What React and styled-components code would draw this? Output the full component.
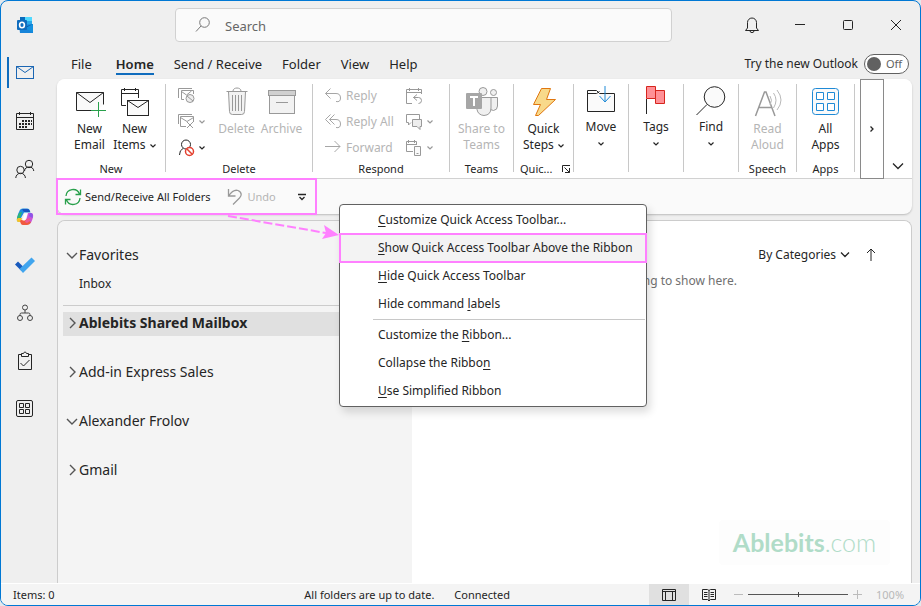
import React, { useState } from "react";
//Style
import styled, { createGlobalStyle, css } from "styled-components";

const App = () => {
	return (
		<>
			<GlobalStyle />
			<Window>
				<TitleBar />
				<Main>
					<Rail />
					<Content>
						<TabBar />
						<RibbonCard>
							<Ribbon />
							<QuickAccess />
						</RibbonCard>
						<Panes>
							<FolderPane />
							<MessageList />
						</Panes>
					</Content>
				</Main>
				<StatusBar />
			</Window>
		</>
	);
};

//Title bar
const TitleBar = () => (
	<StyledTitleBar>
		<OutlookLogo />
		<SearchBox>
			<Svg w={16} h={16} stroke="#777">
				<circle cx="9.5" cy="5.5" r="4.8" />
				<path d="M6 9L1 14.5" />
			</Svg>
			<input type="text" aria-label="Search" placeholder="Search" />
		</SearchBox>
		<WindowButton aria-label="Notifications">
			<Svg w={16} h={18}>
				<path d="M3.5 12V6.5a4.5 4.5 0 0 1 9 0V12l2 2.5h-13zM6 14.8a2 1.8 0 0 0 4 0" />
			</Svg>
		</WindowButton>
		<WindowButton aria-label="Minimize">
			<Svg w={12} h={12}>
				<path d="M1 5.5h10" />
			</Svg>
		</WindowButton>
		<WindowButton aria-label="Maximize">
			<Svg w={12} h={12}>
				<rect x="1.5" y="1.5" width="9" height="9" rx="1" />
			</Svg>
		</WindowButton>
		<WindowButton aria-label="Close">
			<Svg w={12} h={12}>
				<path d="M1 1l10 10M11 1L1 11" />
			</Svg>
		</WindowButton>
	</StyledTitleBar>
);

const OutlookLogo = () => (
	<svg width="18" height="18" viewBox="0 0 18 18" role="img" aria-label="Outlook">
		<rect x="4" y="1" width="12" height="9" fill="#28a8ea" />
		<rect x="8" y="1" width="8" height="4" fill="#50d9ff" />
		<rect x="4" y="1" width="5" height="4" fill="#0a6cbd" />
		<path d="M3 9l14-1v9H4z" fill="#1784d9" />
		<path d="M17 8v8.5L9 12z" fill="#1490df" />
		<path d="M9 12l8-4-8 3z" fill="#0a4f94" />
		<rect x="1" y="4" width="10" height="10" rx="1" fill="#0f6cbd" />
		<ellipse cx="6" cy="9" rx="2.4" ry="2.7" fill="none" stroke="#fff" strokeWidth="1.6" />
	</svg>
);

//Left rail
const railItems = [
	{
		name: "Mail",
		icon: (
			<g stroke="#1b66b3">
				<rect x="1.5" y="3.5" width="17" height="12" />
				<path d="M1.5 3.5l8.5 6 8.5-6" />
			</g>
		),
	},
	{
		name: "Calendar",
		icon: (
			<g>
				<path d="M1.5 2.5h17v16h-17zM1.5 6.5h17M4.5 1v3M15.5 1v3" />
				<path d="M7 10h10M4 13h13M4 16h8" strokeWidth="2" strokeDasharray="2 1" />
			</g>
		),
	},
	{
		name: "People",
		icon: (
			<g>
				<circle cx="14" cy="5" r="3.7" />
				<path d="M9.5 12a4.7 4.7 0 0 1 9.3 0" />
				<circle cx="5.5" cy="11" r="3.7" />
				<path d="M.8 19a4.8 4.8 0 0 1 9.6 0" />
			</g>
		),
	},
	{
		name: "Copilot",
		icon: (
			<g stroke="none">
				<path d="M4 5c1-3 2-3.500 4-3.500h4c2 0 2.500 1 3 2.500l.5 1.500H9L6 11 3 14C1.500 13 2 9 4 5z" fill="#1c8fe0" />
				<path d="M7 2h5c2 0 2.500 1 3 3h-5C8 5 8 3 7 2z" fill="#1a55c0" />
				<path d="M4 6l3-1-3 10c-2 0-2.500-2-2-4z" fill="#2fb673" />
				<path d="M3 11h4l-1 4H3c-2-1-1.500-3 0-4z" fill="#f4c22c" />
				<path d="M13 6h3c2.500 0 2.500 3 1.500 6s-2 5-4 5l-3-1z" fill="#c957d8" />
				<path d="M15 6c3 0 3 2 2.500 5L14 9z" fill="#8b56e8" />
				<path d="M6 13h6l4 2c-1 2-2 3-4 3H8c-2 0-2.500-2-3-4z" fill="#f0593e" />
				<path d="M11 12l4-1c0 3-1 4-3 5l-2-1z" fill="#ef5b94" />
				<path d="M9.500 6.500h3L10 13.500H7.500z" fill="#fff" />
			</g>
		),
	},
	{
		name: "To Do",
		icon: (
			<g stroke="none">
				<path d="M0 9.500L3 6.500 9.500 13 6.500 16z" fill="#185abd" />
				<path d="M4.500 14L16.500 2.500 20 6 8 18z" fill="#41a5ee" />
			</g>
		),
	},
	{
		name: "Org chart",
		icon: (
			<g stroke="#444">
				<circle cx="10" cy="4.500" r="2.5" />
				<path d="M10 7v3M5 13v-1.500q0-1.500 1.500-1.500h7q1.500 0 1.500 1.500V13" />
				<circle cx="5" cy="15" r="2.5" />
				<circle cx="15" cy="15" r="2.5" />
			</g>
		),
	},
	{
		name: "Tasks",
		icon: (
			<g>
				<path d="M6.500 3.500h-3v15h13v-15h-3M6.500 2.500h2l1-1.500h1l1 1.500h2v3h-7z" />
				<path d="M5.500 12l3 3 6-6" />
			</g>
		),
	},
	{
		name: "More apps",
		icon: (
			<g>
				<rect x="1.500" y="1.500" width="16" height="16" rx="1.500" />
				<path d="M4.500 4.500h4v4h-4zM10.500 4.500h4v4h-4zM4.500 10.500h4v4h-4zM10.500 10.500h4v4h-4z" />
			</g>
		),
	},
];

const Rail = () => (
	<StyledRail>
		{railItems.map((item, i) => (
			<RailButton key={item.name} aria-label={item.name} $active={i === 0}>
				<Svg w={20} h={20}>{item.icon}</Svg>
			</RailButton>
		))}
	</StyledRail>
);

//Ribbon tabs
const tabs = ["File", "Home", "Send / Receive", "Folder", "View", "Help"];

const TabBar = () => {
	const [tab, setTab] = useState("Home");
	return (
		<StyledTabBar>
			{tabs.map((name) => (
				<Tab key={name} $active={name === tab} onClick={() => setTab(name)}>
					{name}
				</Tab>
			))}
			<TryNew>
				Try the new Outlook
				<Toggle>
					<input type="checkbox" />
					Off
				</Toggle>
			</TryNew>
		</StyledTabBar>
	);
};

//Ribbon
const Ribbon = () => (
	<StyledRibbon>
		<Group w={108} label="New">
			<Buttons $start={10}>
				<BigButton>
					<Svg w={32} h={32}>
						<path d="M23 24.500H2.500v-18h27v12" fill="#fafafa" />
						<path d="M2.500 6.500L16 16.500l13.500-10" />
						<path d="M24.500 16v15M17 24.500h15" stroke="#29a04c" />
					</Svg>
					<span>New<br />Email</span>
				</BigButton>
				<BigButton>
					<Svg w={32} h={32}>
						<path d="M7 19.500H2.500v-16h17V12M2.500 7.500h17M5.500 2v3M16.500 2v3" />
						<rect x="8.500" y="14.500" width="21" height="15" fill="#fafafa" />
						<path d="M8.500 14.500L19 21.500l10.500-7" />
					</Svg>
					<span>New<br />Items <Chevron /></span>
				</BigButton>
			</Buttons>
		</Group>
		<Group w={146} label="Delete">
			<Buttons $start={12}>
				<SmallColumn $w={36}>
					<SmallButton aria-label="Ignore" disabled>
						<Svg w={18} h={18}>
							<path d="M.5 11V1.500H14M6 12.500H3.500v-9h12V7M3.500 4.500l5 3.500 5-4" />
							<circle cx="12" cy="11.500" r="4" fill="#eee" />
							<path d="M9 9l6 5" />
						</Svg>
					</SmallButton>
					<SmallButton aria-label="Clean Up" disabled>
						<Svg w={18} h={18}>
							<path d="M.5 11V1.500H14M8 13.500H2.500v-10h13V9M2.500 4.500l6.500 4 6.500-4M9 9l6 6M15 9l-6 6" />
						</Svg>
						<Chevron />
					</SmallButton>
					<SmallButton aria-label="Junk">
						<Svg w={18} h={18}>
							<circle cx="8" cy="5.500" r="4.500" />
							<path d="M5 9.500Q1.500 11 1.500 16" />
							<circle cx="11.500" cy="12.500" r="4" stroke="#e3402f" fill="#fff" strokeWidth="1.500" />
							<path d="M9 10l5.500 5.500" stroke="#e3402f" strokeWidth="1.500" />
						</Svg>
						<Chevron />
					</SmallButton>
				</SmallColumn>
				<BigButton disabled>
					<Svg w={32} h={32}>
						<path d="M7.500 5.500h17l-1 20q0 3-3 3h-9q-3 0-3-3z" fill="#f2f2f2" />
						<path d="M5.500 5.500h21M12 5c0-4 8-4 8 0M11.500 9v16M14.500 9v16M17.500 9v16M20.500 9v16" />
					</Svg>
					<span>Delete</span>
				</BigButton>
				<BigButton disabled>
					<Svg w={32} h={32}>
						<rect x="3.500" y="8.500" width="25" height="19" fill="#f2f2f2" />
						<rect x="2.500" y="4.500" width="27" height="5" fill="#d0d0d0" />
						<path d="M10 16.500h12" />
					</Svg>
					<span>Archive</span>
				</BigButton>
			</Buttons>
		</Group>
		<Group w={136} label="Respond">
			<Buttons $start={12}>
				<SmallColumn $w={81}>
					<SmallButton disabled>
						<Svg w={18} h={18} stroke="#a6a6a6">
							<path d="M5.500 1.500l-5 5 5 5M.5 6.500H11q4.500 0 4.500 4.500T11 14.500" />
						</Svg>
						Reply
					</SmallButton>
					<SmallButton disabled>
						<Svg w={18} h={18} stroke="#a6a6a6">
							<path d="M5.500 1.500l-5 5 5 5M9.500 1.500l-5 5 5 5M4.500 6.500H11q4.500 0 4.500 4.500T11 14.500" />
						</Svg>
						Reply All
					</SmallButton>
					<SmallButton disabled>
						<Svg w={18} h={18} stroke="#a6a6a6">
							<path d="M0 7.500h15M9.500 2l5.500 5.500L9.500 13" />
						</Svg>
						Forward
					</SmallButton>
				</SmallColumn>
				<SmallColumn>
					<SmallButton aria-label="Meeting" disabled>
						<Svg w={18} h={18}>
							<path d="M6 16.500H.5v-14h15V7M.5 5.500h15M3.500 1v3M12.500 1v3M11 7.500L7.500 10.500l3.500 3M7.500 10.500h5q3 0 3 3t-3 3" />
						</Svg>
					</SmallButton>
					<SmallButton aria-label="Reply with IM" disabled>
						<Svg w={18} h={18}>
							<path d="M5 9.500L2.500 12V9.500h-2v-8h13V6" />
							<path d="M6.500 6.500h9v7H14v3l-3-3H6.500z" fill="#eee" />
						</Svg>
						<Chevron />
					</SmallButton>
					<SmallButton aria-label="More" disabled>
						<Svg w={18} h={18}>
							<path d="M7 12.500H.5v-10h10V6M.5 5.500h10M2.500 1v3M8.500 1v3" />
							<path d="M8.500 7.500h6v9h-6zM10.500 14.500h2" fill="#fafafa" />
						</Svg>
						<Chevron />
					</SmallButton>
				</SmallColumn>
			</Buttons>
		</Group>
		<Group w={63} label="Teams">
			<Buttons $center>
				<BigButton disabled>
					<Svg w={32} h={32}>
						<circle cx="17" cy="5.500" r="4" fill="#f0f0f0" />
						<circle cx="27.500" cy="6.500" r="3" fill="#f0f0f0" />
						<path d="M24 11.500h7.500V20q0 4-4 4.500l-3-1z" fill="#f0f0f0" />
						<path d="M14 11.500h11V22q0 7-7 7.500-6-.5-7-6z" fill="#f0f0f0" />
						<rect x="0" y="7" width="16" height="16" rx="1" fill="#a6a6a6" stroke="none" />
						<path d="M4 11h8M8 11v9" stroke="#fff" strokeWidth="2" />
					</Svg>
					<span>Share to<br />Teams</span>
				</BigButton>
			</Buttons>
		</Group>
		<Group w={59} label="Quic..." launcher>
			<Buttons $center>
				<BigButton>
					<Svg w={32} h={32} stroke="#e0760f">
						<path d="M13.500 2.500h9l-4 11h9L10.500 29.500h-3l5-11h-7z" fill="#f8d98a" />
					</Svg>
					<span>Quick<br />Steps <Chevron /></span>
				</BigButton>
			</Buttons>
		</Group>
		<Group w={54}>
			<Buttons $center>
				<BigButton $solo>
					<Svg w={32} h={32}>
						<path d="M2.500 25.500v-21h9l3 3h15v18zM2.500 7.500h9l3-2" fill="#fafafa" />
						<path d="M20 0v16M14.500 10l5.500 6 5.500-6" stroke="#1f8ad6" />
					</Svg>
					<span>Move</span>
					<Chevron />
				</BigButton>
			</Buttons>
		</Group>
		<Group w={54}>
			<Buttons $center>
				<BigButton $solo>
					<Svg w={32} h={32}>
						<path d="M6.500 28V13" />
						<path d="M15.500 4.500h9v13h-9z" fill="#ff9096" stroke="#d6251d" />
						<path d="M6.500.5h9v12h-9z" fill="#ff9096" stroke="#d6251d" />
					</Svg>
					<span>Tags</span>
					<Chevron />
				</BigButton>
			</Buttons>
		</Group>
		<Group w={54}>
			<Buttons $center>
				<BigButton $solo>
					<Svg w={32} h={32}>
						<circle cx="19.500" cy="11" r="10.300" fill="#fafafa" />
						<path d="M12 18.500L1.500 29" />
					</Svg>
					<span>Find</span>
					<Chevron />
				</BigButton>
			</Buttons>
		</Group>
		<Group w={57} label="Speech">
			<Buttons $center>
				<BigButton disabled>
					<Svg w={32} h={32}>
						<path d="M3.500 30L12.500 6h1.500l9 24M7 21.500h12.500" strokeWidth="1.500" />
						<path d="M18 10q3 4 0 9M21.500 7q5 7 0 15M25 4q8 10 0 20" stroke="#b8b8b8" />
					</Svg>
					<span>Read<br />Aloud</span>
				</BigButton>
			</Buttons>
		</Group>
		<Group w={57} label="Apps">
			<Buttons $center>
				<BigButton>
					<Svg w={32} h={32} stroke="#1f8ad6">
						<rect x="2.500" y="2.500" width="26" height="26" rx="3" fill="#fafafa" />
						<path d="M6.500 6.500h7v7h-7zM17.500 6.500h7v7h-7zM6.500 17.500h7v7h-7zM17.500 17.500h7v7h-7z" fill="#fff" />
					</Svg>
					<span>All<br />Apps</span>
				</BigButton>
			</Buttons>
		</Group>
		<ScrollButton aria-label="Scroll ribbon">
			<Svg w={6} h={8}>
				<path d="M1.500 1.500L4 4 1.500 6.500" strokeWidth="1.300" />
			</Svg>
		</ScrollButton>
		<CollapseButton aria-label="Ribbon display options">
			<Svg w={12} h={8}>
				<path d="M1 1.500l5 5 5-5" strokeWidth="1.300" />
			</Svg>
		</CollapseButton>
	</StyledRibbon>
);

const Group = ({ w, label, launcher, children }) => (
	<>
		<StyledGroup $w={w}>
			{children}
			<GroupLabel $spread={launcher}>
				{label}
				{launcher && (
					<Svg w={10} h={10}>
						<path d="M1.500 8V1.500H9M3.500 3.500l5 5M8.500 4v4.500H4" />
					</Svg>
				)}
			</GroupLabel>
		</StyledGroup>
		<Separator />
	</>
);

//Quick access toolbar with its drop-down
const menuItems = [
	["", "C", "ustomize Quick Access Toolbar..."],
	["", "S", "how Quick Access Toolbar Above the Ribbon"],
	["", "H", "ide Quick Access Toolbar"],
	["Hide command ", "l", "abels"],
	null,
	["Customize the ", "R", "ibbon..."],
	["Collapse the Ribbo", "n", ""],
	["", "U", "se Simplified Ribbon"],
];

const QuickAccess = () => (
	<StyledQuickAccess>
		<QuickTools>
			<QuickButton>
				<Svg w={18} h={18} stroke="#29a04c" strokeWidth="1.300">
					<path d="M2 8a7 7 0 0 1 13.500-2M16.500 1.500v5h-5M16 10a7 7 0 0 1-13.500 2M1.500 16.500v-5h5" />
				</Svg>
				Send/Receive All Folders
			</QuickButton>
			<QuickButton disabled>
				<Svg w={18} h={18} strokeWidth="1.300">
					<path d="M2.500 1v7h7M2.500 8C6 3 9 1.500 12 2.500c4.500 2 3.500 5.500 1.500 7.500L7 16.500" />
				</Svg>
				Undo
			</QuickButton>
			<CustomizeButton aria-label="Customize Quick Access Toolbar">
				<Svg w={8} h={8}>
					<path d="M0 1.500h8M1.500 4L4 6.500 6.500 4" strokeWidth="1.300" />
				</Svg>
			</CustomizeButton>
		</QuickTools>
		<Arrow width="114" height="28" viewBox="0 0 114 28">
			<path d="M1 2l98 17" stroke="#ff80ff" strokeWidth="2" strokeDasharray="9 3" fill="none" />
			<path d="M112 21L95 25l4-6-2-8z" fill="#ff80ff" />
		</Arrow>
		<Menu role="menu">
			{menuItems.map((item, i) =>
				item ? (
					<MenuItem key={i} role="menuitem" $marked={i === 1}>
						{item[0]}
						<u>{item[1]}</u>
						{item[2]}
					</MenuItem>
				) : (
					<MenuRule key={i} />
				)
			)}
		</Menu>
	</StyledQuickAccess>
);

//Folders
const accounts = [
	{ name: "Ablebits Shared Mailbox", open: false, selected: true },
	{ name: "Add-in Express Sales", open: false },
	{ name: "Alexander Frolov", open: true },
	{ name: "Gmail", open: false },
];

const FolderPane = () => (
	<StyledFolderPane>
		<Favorites>
			<Folder name="Favorites" open />
			<SubFolder>Inbox</SubFolder>
		</Favorites>
		<Accounts>
			{accounts.map((account) => (
				<Folder key={account.name} {...account} />
			))}
		</Accounts>
	</StyledFolderPane>
);

const Folder = ({ name, open, selected }) => (
	<FolderButton $selected={selected} aria-expanded={open}>
		<Svg w={12} h={12} stroke="#555" strokeWidth="1.400">
			<path d={open ? "M1 4l5 5 5-5" : "M4 1l5 5-5 5"} />
		</Svg>
		{name}
	</FolderButton>
);

const MessageList = () => (
	<StyledMessageList>
		<SortBar>
			<SortButton>
				By Categories
				<Svg w={10} h={8}>
					<path d="M1 1.500l4 4 4-4" strokeWidth="1.300" />
				</Svg>
			</SortButton>
			<SortButton aria-label="Reverse order">
				<Svg w={10} h={14}>
					<path d="M5 1v12M1 5l4-4 4 4" />
				</Svg>
			</SortButton>
		</SortBar>
		<Empty>We didn't find anything to show here.</Empty>
		<Watermark>
			<b>Ablebits</b>.com
		</Watermark>
	</StyledMessageList>
);

//Status bar
const StatusBar = () => (
	<StyledStatusBar>
		<span>Items: 0</span>
		<SyncState>
			<span>All folders are up to date.</span>
			<span>Connected</span>
		</SyncState>
		<ViewButton aria-label="Normal view" $active>
			<Svg w={16} h={14}>
				<path d="M1.500 1.500h13v11h-13zM1.500 3.500h13M4.500 3.500v9M11.500 3.500v9" />
			</Svg>
		</ViewButton>
		<ViewButton aria-label="Reading view">
			<Svg w={14} h={14}>
				<path d="M7 2.500L5.500 1.500h-5v10h5L7 13l1.500-1.500h5v-10h-5zM7 2.500V13M2 4.500h3.500M2 6.500h3.500M2 8.500h3.500M8.500 4.500H12M8.500 6.500H12M8.500 8.500H12" />
			</Svg>
		</ViewButton>
		<ZoomControls>
			<ZoomButton aria-label="Zoom out">
				<Svg w={9} h={9} stroke="#bbb">
					<path d="M0 4.500h9" />
				</Svg>
			</ZoomButton>
			<ZoomSlider type="range" aria-label="Zoom" defaultValue="50" />
			<ZoomButton aria-label="Zoom in">
				<Svg w={9} h={9} stroke="#bbb">
					<path d="M0 4.500h9M4.500 0v9" />
				</Svg>
			</ZoomButton>
			<ZoomValue>100%</ZoomValue>
		</ZoomControls>
	</StyledStatusBar>
);

//Icons
const Svg = ({ w, h, stroke = "currentColor", children, ...rest }) => (
	<svg width={w} height={h} viewBox={`0 0 ${w} ${h}`} fill="none" stroke={stroke} aria-hidden="true" {...rest}>
		{children}
	</svg>
);

const Chevron = () => (
	<Svg w={6} h={6} strokeWidth="1.200">
		<path d="M.5 1.500L3 4 5.500 1.500" />
	</Svg>
);

const GlobalStyle = createGlobalStyle`
	* {
		box-sizing: border-box;
	}
	body {
		margin: 0;
		background: #e4e8ec;
	}
	body, button, input {
		font-family: "Noto Sans", "Open Sans", sans-serif;
		font-size: 12px;
		line-height: 16px;
		color: #252525;
	}
	button {
		border: none;
		background: none;
		padding: 0;
		margin: 0;
		white-space: nowrap;
	}
	svg {
		flex: none;
	}
`;

const Window = styled.div`
	min-height: 100vh;
	display: flex;
	flex-direction: column;
	border: 1px solid #0078d4;
	border-radius: 8px;
	background: #efefef;
	overflow: hidden;
`;

const StyledTitleBar = styled.header`
	height: 48px;
	display: flex;
	align-items: center;
	padding-left: 15px;
`;

const SearchBox = styled.label`
	flex: 1;
	height: 34px;
	margin: 0 56px 0 141px;
	padding: 0 19px;
	display: flex;
	align-items: center;
	gap: 14px;
	border: 1px solid #d1d1d1;
	border-radius: 4px;
	background: #fafafa;
	input {
		flex: 1;
		border: none;
		outline: none;
		background: none;
		padding: 2px 0 0;
		font-size: 13px;
		&::placeholder {
			color: #666;
		}
	}
`;

const WindowButton = styled.button`
	width: 48px;
	height: 48px;
	display: flex;
	align-items: center;
	justify-content: center;
`;

const Main = styled.div`
	flex: 1;
	display: flex;
`;

const StyledRail = styled.nav`
	width: 56px;
	flex: none;
	display: flex;
	flex-direction: column;
`;

const RailButton = styled.button`
	height: 48px;
	display: flex;
	align-items: center;
	padding-left: 14px;
	position: relative;
	${({ $active }) =>
		$active &&
		css`
			&::before {
				content: "";
				position: absolute;
				left: 6px;
				top: 8px;
				width: 2px;
				height: 31px;
				background: #0f6cbd;
			}
		`}
`;

const Content = styled.div`
	flex: 1;
	min-width: 0;
	display: flex;
	flex-direction: column;
	padding-right: 8px;
`;

const StyledTabBar = styled.div`
	height: 30px;
	display: flex;
	align-items: center;
	gap: 20px;
	padding: 0 3px 0 14px;
`;

const Tab = styled.button`
	height: 22px;
	padding-top: 2px;
	font-size: 13px;
	font-weight: ${({ $active }) => ($active ? 600 : 400)};
	border-bottom: 2px solid ${({ $active }) => ($active ? "#0f6cbd" : "transparent")};
	&:first-child {
		margin-right: 4px;
	}
`;

const TryNew = styled.label`
	margin-left: auto;
	display: flex;
	align-items: center;
	gap: 6px;
`;

const Toggle = styled.span`
	width: 45px;
	height: 20px;
	display: flex;
	align-items: center;
	gap: 5px;
	padding-left: 2px;
	border: 1px solid #616161;
	border-radius: 10px;
	background: #fff;
	font-size: 11px;
	color: #616161;
	input {
		appearance: none;
		margin: 0;
		width: 14px;
		height: 14px;
		border-radius: 50%;
		background: #616161;
	}
`;

const RibbonCard = styled.section`
	border-radius: 8px;
	background: #fafafa;
	box-shadow: 0 1px 2px #bbb;
`;

const StyledRibbon = styled.div`
	height: 100px;
	display: flex;
	background: #fff;
	border-bottom: 1px solid #d1d1d1;
	border-radius: 8px 8px 0 0;
`;

const StyledGroup = styled.div`
	width: ${({ $w }) => $w}px;
	flex: none;
	display: flex;
	flex-direction: column;
	justify-content: space-between;
	padding: 7px 0 1px;
`;

const Separator = styled.div`
	width: 1px;
	flex: none;
	margin: 5px 0 6px;
	background: #c8c8c8;
`;

const GroupLabel = styled.div`
	display: flex;
	align-items: center;
	justify-content: ${({ $spread }) => ($spread ? "space-between" : "center")};
	padding: ${({ $spread }) => ($spread ? "0 2px 0 6px" : "0")};
	font-size: 11px;
`;

const Buttons = styled.div`
	display: flex;
	align-items: flex-start;
	justify-content: ${({ $center }) => ($center ? "center" : "flex-start")};
	padding-left: ${({ $start = 0 }) => $start}px;
`;

const BigButton = styled.button`
	min-width: 45px;
	display: flex;
	flex-direction: column;
	align-items: center;
	gap: ${({ $solo }) => ($solo ? 1 : 3)}px;
	&:disabled {
		color: #b5b5b5;
		> svg {
			color: #999;
		}
	}
	span svg {
		margin-left: 1px;
	}
	> svg + span + svg {
		margin-top: 5px;
	}
`;

const SmallColumn = styled.div`
	width: ${({ $w }) => ($w ? `${$w}px` : "auto")};
	flex: none;
	display: flex;
	flex-direction: column;
	align-items: flex-start;
	gap: 8px;
	padding-top: 1px;
`;

const SmallButton = styled.button`
	display: flex;
	align-items: center;
	gap: 3px;
	height: 18px;
	&:disabled {
		color: #b5b5b5;
		svg {
			color: #999;
		}
	}
`;

const ScrollButton = styled.button`
	width: 24px;
	flex: none;
	margin: 0 0 -1px 5px;
	border: 1px solid #8a8a8a;
`;

const CollapseButton = styled.button`
	flex: 1;
	align-self: flex-end;
	height: 24px;
`;

const StyledQuickAccess = styled.div`
	position: relative;
	height: 35px;
	display: flex;
`;

const QuickTools = styled.div`
	display: flex;
	align-items: center;
	padding: 0 4px 0 7px;
	outline: 2px solid #ff80ff;
	outline-offset: -1px;
`;

const QuickButton = styled.button`
	display: flex;
	align-items: center;
	gap: 3px;
	margin-right: 16px;
	font-size: 11px;
	&:disabled {
		color: #b5b5b5;
		svg {
			color: #999;
		}
	}
`;

const CustomizeButton = styled.button`
	width: 20px;
	height: 24px;
`;

const Arrow = styled.svg`
	position: absolute;
	left: 170px;
	top: 35px;
	z-index: 3;
`;

const Menu = styled.div`
	position: absolute;
	left: 282px;
	top: 25px;
	z-index: 2;
	width: 308px;
	padding: 1px 0;
	display: flex;
	flex-direction: column;
	border: 1px solid #616161;
	border-radius: 4px;
	background: #fff;
	box-shadow: 3px 5px 8px rgba(0, 0, 0, 0.14);
`;

const MenuItem = styled.button`
	height: 28px;
	padding-left: 38px;
	text-align: left;
	${({ $marked }) =>
		$marked &&
		css`
			background: #f3f3f3;
			outline: 2px solid #ff80ff;
			outline-offset: -1px;
		`}
	u {
		text-underline-offset: 2px;
	}
`;

const MenuRule = styled.hr`
	width: 272px;
	height: 1px;
	margin: 1px 1px 1px auto;
	border: none;
	background: #c8c8c8;
`;

const Panes = styled.div`
	flex: 1;
	display: flex;
	margin-top: 6px;
	border: 1px solid #ccc;
	border-bottom: none;
	border-radius: 8px 8px 0 0;
	overflow: hidden;
`;

const StyledFolderPane = styled.aside`
	width: 354px;
	flex: none;
	padding: 23px 0 0 5px;
	background: #f4f4f4;
`;

const Favorites = styled.div`
	padding-bottom: 13px;
	border-bottom: 1px solid #ccc;
`;

const Accounts = styled.div`
	display: flex;
	flex-direction: column;
	gap: 25px;
	padding-top: 6px;
`;

const FolderButton = styled.button`
	width: 100%;
	height: 24px;
	display: flex;
	align-items: center;
	gap: 1px;
	padding: 0 0 2px 3px;
	font-size: 14px;
	line-height: 20px;
	font-weight: ${({ $selected }) => ($selected ? 700 : 400)};
	background: ${({ $selected }) => ($selected ? "#e0e0e0" : "none")};
`;

const SubFolder = styled.button`
	display: block;
	margin-top: 8px;
	padding-left: 16px;
`;

const StyledMessageList = styled.main`
	flex: 1;
	position: relative;
	padding-top: 26px;
	background: #fff;
`;

const SortBar = styled.div`
	display: flex;
	justify-content: flex-end;
	gap: 16px;
	padding-right: 35px;
`;

const SortButton = styled.button`
	display: flex;
	align-items: center;
	gap: 4px;
`;

const Empty = styled.p`
	margin: 10px 174px 0 0;
	text-align: right;
	color: #707070;
`;

const Watermark = styled.div`
	position: absolute;
	right: 21px;
	bottom: 18px;
	width: 171px;
	height: 45px;
	border-radius: 4px;
	background: #fdfdfd;
	color: #b0dcc8;
	font-family: Lato, sans-serif;
	font-size: 25px;
	font-weight: 300;
	line-height: 45px;
	text-align: center;
	b {
		font-weight: 700;
	}
`;

const StyledStatusBar = styled.footer`
	height: 22px;
	display: flex;
	align-items: center;
	padding: 0 18px 0 12px;
	border-top: 1px solid #fff;
	background: #f4f4f4;
	font-size: 11px;
`;

const SyncState = styled.div`
	display: flex;
	gap: 20px;
	margin-left: auto;
	padding-right: 139px;
`;

const ViewButton = styled.button`
	width: 40px;
	height: 21px;
	display: flex;
	align-items: center;
	justify-content: center;
	background: ${({ $active }) => ($active ? "#e0e0e0" : "none")};
`;

const ZoomControls = styled.div`
	display: flex;
	align-items: center;
	gap: 5px;
	margin-left: 5px;
`;

const ZoomButton = styled.button`
	display: flex;
`;

const ZoomSlider = styled.input`
	appearance: none;
	width: 100px;
	height: 10px;
	margin: 0;
	background: linear-gradient(#555, #555) center / 100% 1px no-repeat;
	&::-webkit-slider-thumb {
		appearance: none;
		width: 1px;
		height: 5px;
		background: #444;
	}
`;

const ZoomValue = styled.span`
	width: 26px;
	margin-left: 9px;
	color: #b8b8b8;
`;

export default App;
